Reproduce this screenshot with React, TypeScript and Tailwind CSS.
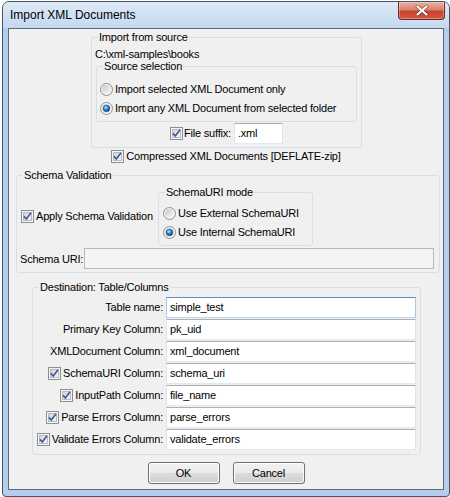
import type { ReactNode } from 'react';

const font = "font-[family-name:'Liberation_Sans',Arial,sans-serif]";

function CheckBox() {
  return (
    <svg width="13" height="13" viewBox="0 0 13 13" className="shrink-0">
      <defs>
        <linearGradient id="cbFill" x1="0" y1="0" x2="1" y2="1">
          <stop offset="0" stopColor="#cdd1d8" />
          <stop offset="1" stopColor="#f8f8f8" />
        </linearGradient>
      </defs>
      <rect x="0.5" y="0.5" width="12" height="12" fill="#f6f6f6" stroke="#8e8f8f" />
      <rect x="2.5" y="2.5" width="8" height="8" fill="url(#cbFill)" stroke="#b6bac1" />
      <path d="M3 6.4 5.3 9 10 2.8" fill="none" stroke="#42569b" strokeWidth="1.6" />
    </svg>
  );
}

function Radio({ on }: { on?: boolean }) {
  return (
    <svg width="13" height="13" viewBox="0 0 13 13" className="shrink-0">
      <defs>
        <linearGradient id="rbFill" x1="0" y1="0" x2="1" y2="1">
          <stop offset="0" stopColor="#c9c9c9" />
          <stop offset="1" stopColor="#fbfbfb" />
        </linearGradient>
        <radialGradient id="rbDot" cx="0.4" cy="0.35" r="0.7">
          <stop offset="0" stopColor="#b8ecff" />
          <stop offset="0.45" stopColor="#2a8ad4" />
          <stop offset="1" stopColor="#0d3a6e" />
        </radialGradient>
      </defs>
      <circle cx="6.5" cy="6.5" r="6" fill="#f4f4f4" stroke="#8f8f8f" />
      <circle cx="6.5" cy="6.5" r="4.5" fill="url(#rbFill)" />
      {on && <circle cx="6.5" cy="6.5" r="3.3" fill="url(#rbDot)" stroke="#18497a" strokeWidth="0.6" />}
    </svg>
  );
}

function Group({ title, className, children }: { title: string; className?: string; children: ReactNode }) {
  return (
    <fieldset className={`border border-[#d5dfe5] rounded-[3px] ${className ?? ''}`}>
      <legend className="ml-[6px] px-[1px] leading-[13px]">{title}</legend>
      {children}
    </fieldset>
  );
}

function Field({ value, focus, className }: { value?: string; focus?: boolean; className?: string }) {
  const border = focus
    ? 'border-t-[#5d8fc1] border-x-[#a9c8e6] border-b-[#bcd8ee]'
    : 'border-t-[#abadb3] border-x-[#e2e3ea] border-b-[#e3e9ef]';
  return (
    <div className={`h-[21px] bg-white border ${border} pl-[3px] flex items-center leading-[13px] ${className ?? ''}`}>
      {value}
    </div>
  );
}

function CloseButton() {
  return (
    <div className="mr-[4px] w-[47px] h-[18px] rounded-b-[4px] border border-t-0 border-[#6b2a20] bg-[linear-gradient(#eab0a3,#d88370_45%,#c8452f_55%,#d0583f)] shadow-[inset_0_0_0_1px_rgba(255,255,255,0.3)] flex items-center justify-center">
      <svg width="14" height="11" viewBox="0 0 14 11">
        <path d="M2.5 1.5 11.5 9.5M11.5 1.5 2.5 9.5" stroke="#4a1810" strokeWidth="3.6" strokeLinecap="round" opacity="0.6" />
        <path d="M2.5 1.5 11.5 9.5M11.5 1.5 2.5 9.5" stroke="#fff" strokeWidth="2.2" strokeLinecap="round" />
      </svg>
    </div>
  );
}

function Button({ children }: { children: ReactNode }) {
  return (
    <div className="w-[72px] h-[22px] rounded-[3px] border border-[#707070] bg-[linear-gradient(#f2f2f2,#ebebeb_50%,#dddddd_50%,#cfcfcf)] shadow-[inset_0_0_0_1px_#fcfcfc] flex items-center justify-center leading-[13px]">
      {children}
    </div>
  );
}

const rows = [
  { label: 'Table name:', value: 'simple_test', focus: true },
  { label: 'Primary Key Column:', value: 'pk_uid' },
  { label: 'XMLDocument Column:', value: 'xml_document' },
  { label: 'SchemaURI Column:', value: 'schema_uri', check: true },
  { label: 'InputPath Column:', value: 'file_name', check: true },
  { label: 'Parse Errors Column:', value: 'parse_errors', check: true },
  { label: 'Validate Errors Column:', value: 'validate_errors', check: true },
];

export default function App() {
  return (
    <div className={`w-[450px] h-[497px] bg-white overflow-hidden text-[11px] tracking-[-0.2px] text-black ${font}`}>
      <div className="ml-[2px] mt-[1px] w-[448px] h-[496px] border border-[#4a5563] rounded-t-[7px] rounded-b-[4px] bg-[#b3cdec] flex flex-col overflow-hidden">
        <div className="h-[26px] shrink-0 flex justify-between bg-[linear-gradient(#dde9f6,#c4d8ef)]">
          <span className="pl-[7px] pt-[5px] text-[12px] leading-[16px] tracking-normal">Import XML Documents</span>
          <CloseButton />
        </div>

        <div className="mx-[5px] h-[462px] shrink-0 border border-[#5b6b7c] bg-[#f0f0f0] flex flex-col">
          {/* source */}
          <Group title="Import from source" className="mt-[2px] ml-[82px] w-[271px] pb-[3px]">
            <div className="mt-[4px] pl-[3px] leading-[12px]">{'C:\\xml-samples\\books'}</div>
            <Group title="Source selection" className="mx-[4px] pb-[3px]">
              <div className="mt-[7px] pl-[3px]">
                <div className="h-[19px] flex items-center gap-[2px]">
                  <Radio />
                  <span>Import selected XML Document only</span>
                </div>
                <div className="h-[19px] flex items-center gap-[2px]">
                  <Radio on />
                  <span>Import any XML Document from selected folder</span>
                </div>
              </div>
            </Group>
            <div className="mt-[1px] h-[21px] flex items-center justify-center">
              <CheckBox />
              <span className="ml-[1px]">File suffix:</span>
              <Field value=".xml" className="ml-[3px] w-[49px]" />
            </div>
          </Group>

          <div className="mt-[2px] flex items-center justify-center gap-[2px] leading-[13px]">
            <CheckBox />
            <span>Compressed XML Documents [DEFLATE-zip]</span>
          </div>

          {/* schema validation */}
          <Group title="Schema Validation" className="mt-[6px] ml-[7px] w-[424px] pb-[3px]">
            <div className="mt-[4px] flex items-center">
              <div className="pl-[4px] flex items-center gap-[2px]">
                <CheckBox />
                <span>Apply Schema Validation</span>
              </div>
              <Group title="SchemaURI mode" className="ml-[5px] w-[155px] pb-[3px]">
                <div className="mt-[5px] pl-[4px]">
                  <div className="h-[19px] flex items-center gap-[2px]">
                    <Radio />
                    <span>Use External SchemaURI</span>
                  </div>
                  <div className="h-[19px] flex items-center gap-[2px]">
                    <Radio on />
                    <span>Use Internal SchemaURI</span>
                  </div>
                </div>
              </Group>
            </div>
            <div className="mt-[2px] flex items-center pl-[3px] pr-[5px]">
              <span className="pt-[2px]">Schema URI:</span>
              <div className="ml-[1px] flex-1 h-[21px] border border-[#b9b9b9] bg-[#f4f4f4]" />
            </div>
          </Group>

          {/* destination */}
          <Group title="Destination: Table/Columns" className="mt-[8px] ml-[23px] w-[389px] pb-[4px]">
            <div className="mt-[3px] grid grid-cols-[130px_250px] gap-x-[3px] gap-y-[1px]">
              {rows.map(r => (
                <div key={r.label} className="contents">
                  <div className="flex items-center justify-end gap-[2px] whitespace-nowrap">
                    {r.check && <CheckBox />}
                    <span>{r.label}</span>
                  </div>
                  <Field value={r.value} focus={r.focus} />
                </div>
              ))}
            </div>
          </Group>

          <div className="mt-[7px] flex justify-center gap-[13px]">
            <Button>OK</Button>
            <Button>Cancel</Button>
          </div>
        </div>
      </div>
    </div>
  );
}
